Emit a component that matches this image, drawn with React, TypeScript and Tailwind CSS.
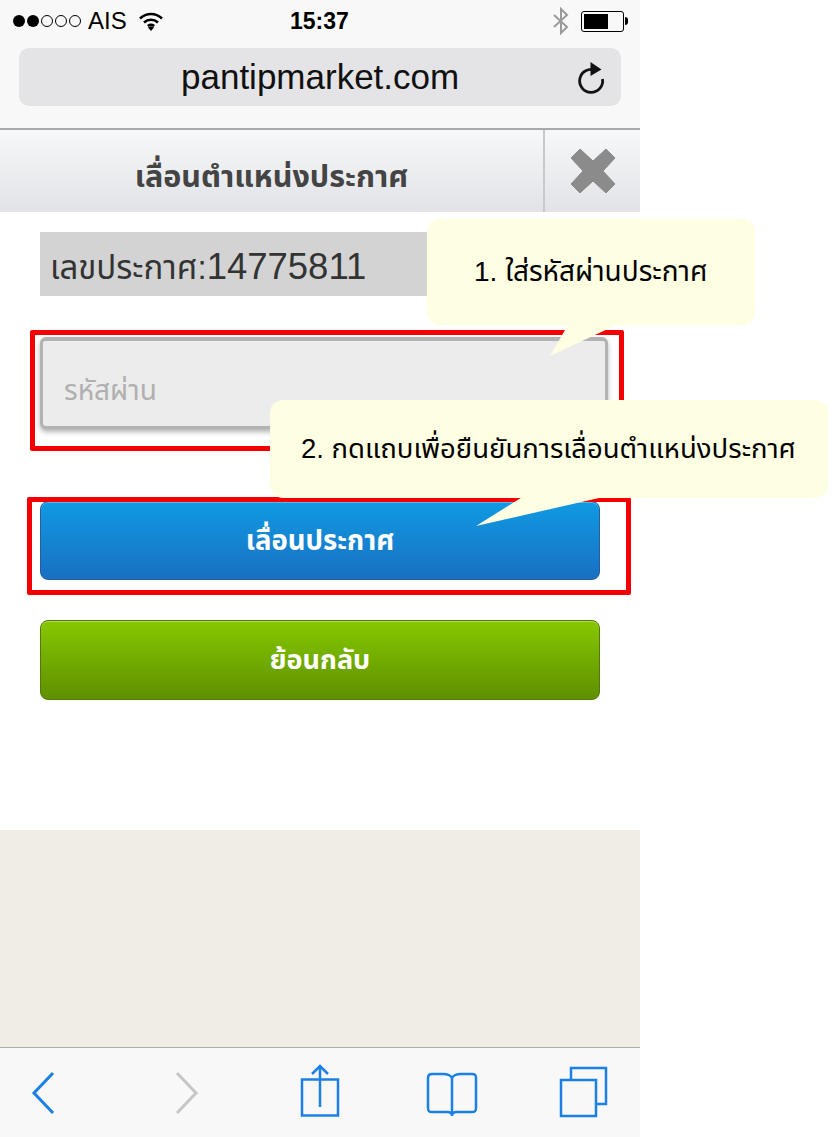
const thai = "font-['Liberation_Sans','Noto_Sans','Noto_Sans_Thai','Loma',sans-serif]";

const Wifi = () => (
  <svg width="26" height="22" viewBox="0 0 26 22" fill="none" stroke="#000" strokeWidth="2.6">
    <path d="M2 8.500c6.500-6 15.500-6 22 0" />
    <path d="M6 12.500c4-3.600 10-3.600 14 0" />
    <path d="M9.800 16c2-1.500 4.400-1.500 6.400 0" />
    <path d="M13 21l-3-3.500c2-1.300 4-1.300 6 0z" fill="#000" stroke="none" />
  </svg>
);

const StatusBar = () => (
  <div className="flex h-[42px] items-center pl-[13px] pr-[12px] text-black">
    <div className="flex items-center gap-[2px]">
      <span className="h-[12px] w-[12px] rounded-full bg-black" />
      <span className="h-[12px] w-[12px] rounded-full bg-black" />
      <span className="h-[12px] w-[12px] rounded-full border border-black" />
      <span className="h-[12px] w-[12px] rounded-full border border-black" />
      <span className="h-[12px] w-[12px] rounded-full border border-black" />
    </div>
    <span className="ml-[7px] w-[50px] text-[24px] leading-none">AIS</span>
    <Wifi />
    <span className="ml-[126px] w-[58px] text-[23px] font-bold leading-none">15:37</span>
    <div className="ml-auto flex items-center gap-[11px]">
      <svg width="18" height="28" viewBox="0 0 18 28" fill="none" stroke="#9a9a9a" strokeWidth="2">
        <path d="M2 8l13 12-6 6V2l6 6L2 20" />
      </svg>
      <div className="flex items-center">
        <div className="h-[21px] w-[43px] rounded-[3px] border border-black p-[2px]">
          <div className="h-full w-[24px] bg-black" />
        </div>
        <div className="ml-[1px] h-[8px] w-[3px] rounded-r-sm bg-black" />
      </div>
    </div>
  </div>
);

const UrlBar = () => (
  <div className="mx-[19px] mt-[6px] flex h-[58px] items-center rounded-[10px] bg-[#e4e4e6] pr-[15px]">
    <span className="mb-[2px] ml-[162px] text-[35px] leading-none text-[#111]">pantipmarket.com</span>
    <svg className="ml-auto" width="30" height="34" viewBox="0 0 30 34" fill="none">
      <path d="M19.500 10.200A11.500 11.500 0 1 0 26.500 19" stroke="#111" strokeWidth="2.800" />
      <path d="M14.500 2l11 7.500-11 6.500z" fill="#111" />
    </svg>
  </div>
);

const Header = () => (
  <div className="flex h-[84px] border-t-2 border-[#a9a9a9] bg-gradient-to-b from-[#f7f8f9] to-[#e2e3e7]">
    <div className={`flex flex-1 items-center justify-center pt-[10px] text-[30.5px] font-bold leading-none text-[#444] ${thai}`}>
      เลื่อนตำแหน่งประกาศ
    </div>
    <div className="flex w-[97px] items-center justify-center border-l-2 border-[#c8c9cc]">
      <svg width="46" height="46" viewBox="0 0 46 46" fill="#8b8b8b">
        <path d="M10 1l13 12L36 1l9 9-12 13 12 13-9 9-13-12-13 12-9-9 12-13L1 10z" stroke="#8b8b8b" strokeWidth="1" strokeLinejoin="round" />
      </svg>
    </div>
  </div>
);

const Toolbar = () => (
  <div className="flex h-[90px] border-t border-[#b0aea6] bg-[#f8f8f8]">
    <svg width="640" height="89" viewBox="0 0 640 89" fill="none" stroke="#1a80e5" strokeWidth="2.500">
      <path d="M53 25L34 45l19 20" strokeWidth="3" />
      <path d="M177 25l19 20-19 20" stroke="#c6c6c6" strokeWidth="3" />
      <path d="M302 31.500h36v36h-36zM320 59V18M312 26l8-8 8 8" />
      <path d="M452 30c-2-4-6-4-9-4h-11c-3 0-4 1.500-4 4v30c0 3 1 4 4 4h16c2 0 3 1 4 2 1-1 2-2 4-2h16c3 0 4-1 4-4V30c0-3-1-4-4-4h-11c-3 0-7 0-9 4zM452 30v38" />
      <path d="M561 32h35v36h-35zM571 32V20h35v36h-10" />
    </svg>
  </div>
);

const Callout = ({ className, tail, children }: { className: string; tail: React.ReactNode; children: React.ReactNode }) => (
  <div className={`absolute rounded-[13px] bg-[#fefee3] leading-none text-black ${thai} ${className}`}>
    {tail}
    {children}
  </div>
);

export default function App() {
  return (
    <div className={`relative h-[1137px] w-[837px] overflow-hidden bg-white ${thai}`}>
      <div className="flex h-full w-[640px] flex-col">
        <div className="h-[128px] bg-[#f8f8f8] font-['Liberation_Sans',sans-serif]">
          <StatusBar />
          <UrlBar />
        </div>
        <Header />

        <main className="flex h-[618px] flex-col bg-white pl-[40px] pt-[20px]">
          <div className="flex h-[64px] w-[560px] items-center bg-[#d3d3d3] pl-[10px] pt-[6px] text-[36.5px] leading-none text-[#333]">
            <span className="text-[33px]">เลขประกาศ:</span>14775811
          </div>
          <div className="mt-[41px] flex h-[92px] w-[568px] items-center rounded-[6px] border-[3px] border-t-4 border-[#b3b3b3] bg-[#ececec] pl-[21px] pt-[15px] text-[28px] leading-none text-[#b0b0b0] shadow-[0_3px_5px_rgba(0,0,0,0.3)]">
            รหัสผ่าน
          </div>
          <button className="mt-[72px] flex h-[79px] w-[560px] items-center justify-center rounded-[8px] border border-[#2a5d9e] bg-gradient-to-b from-[#0f9ae2] to-[#1870c2] text-[27.5px] font-bold leading-none text-white shadow-[inset_0_1px_0_rgba(255,255,255,0.3)]">
            เลื่อนประกาศ
          </button>
          <button className="mt-[40px] flex h-[80px] w-[560px] items-center justify-center rounded-[8px] border border-[#56770a] bg-gradient-to-b from-[#86c800] to-[#5f9000] text-[27px] font-bold leading-none text-white shadow-[inset_0_1px_0_rgba(255,255,255,0.35)]">
            ย้อนกลับ
          </button>
        </main>

        <div className="h-[217px] bg-[#f0ece6]" />
        <Toolbar />
      </div>

      {/* red annotation frames */}
      <div className="absolute left-[30px] top-[330px] h-[121px] w-[594px] rounded-[2px] border-[5px] border-[#f40000]" />
      <div className="absolute left-[27px] top-[497px] h-[98px] w-[604px] rounded-[2px] border-[5px] border-[#f40000]" />

      <Callout
        className="left-[427px] top-[219px] h-[106px] w-[328px] pl-[47px] pt-[39px] text-[28px]"
        tail={
          <svg className="absolute left-[120px] top-[104px]" width="70" height="36" viewBox="0 0 70 36">
            <path d="M22 0L3 33 65 4V0z" fill="#fefee3" />
          </svg>
        }
      >
        1. ใส่รหัสผ่านประกาศ
      </Callout>
      <Callout
        className="left-[270px] top-[400px] h-[98px] w-[558px] pl-[31px] pt-[35px] text-[27.5px]"
        tail={
          <svg className="absolute left-[204px] top-[96px]" width="130" height="34" viewBox="0 0 130 34">
            <path d="M50 0L2 30 125 2V0z" fill="#fefee3" />
          </svg>
        }
      >
        2. กดแถบเพื่อยืนยันการเลื่อนตำแหน่งประกาศ
      </Callout>
    </div>
  );
}
